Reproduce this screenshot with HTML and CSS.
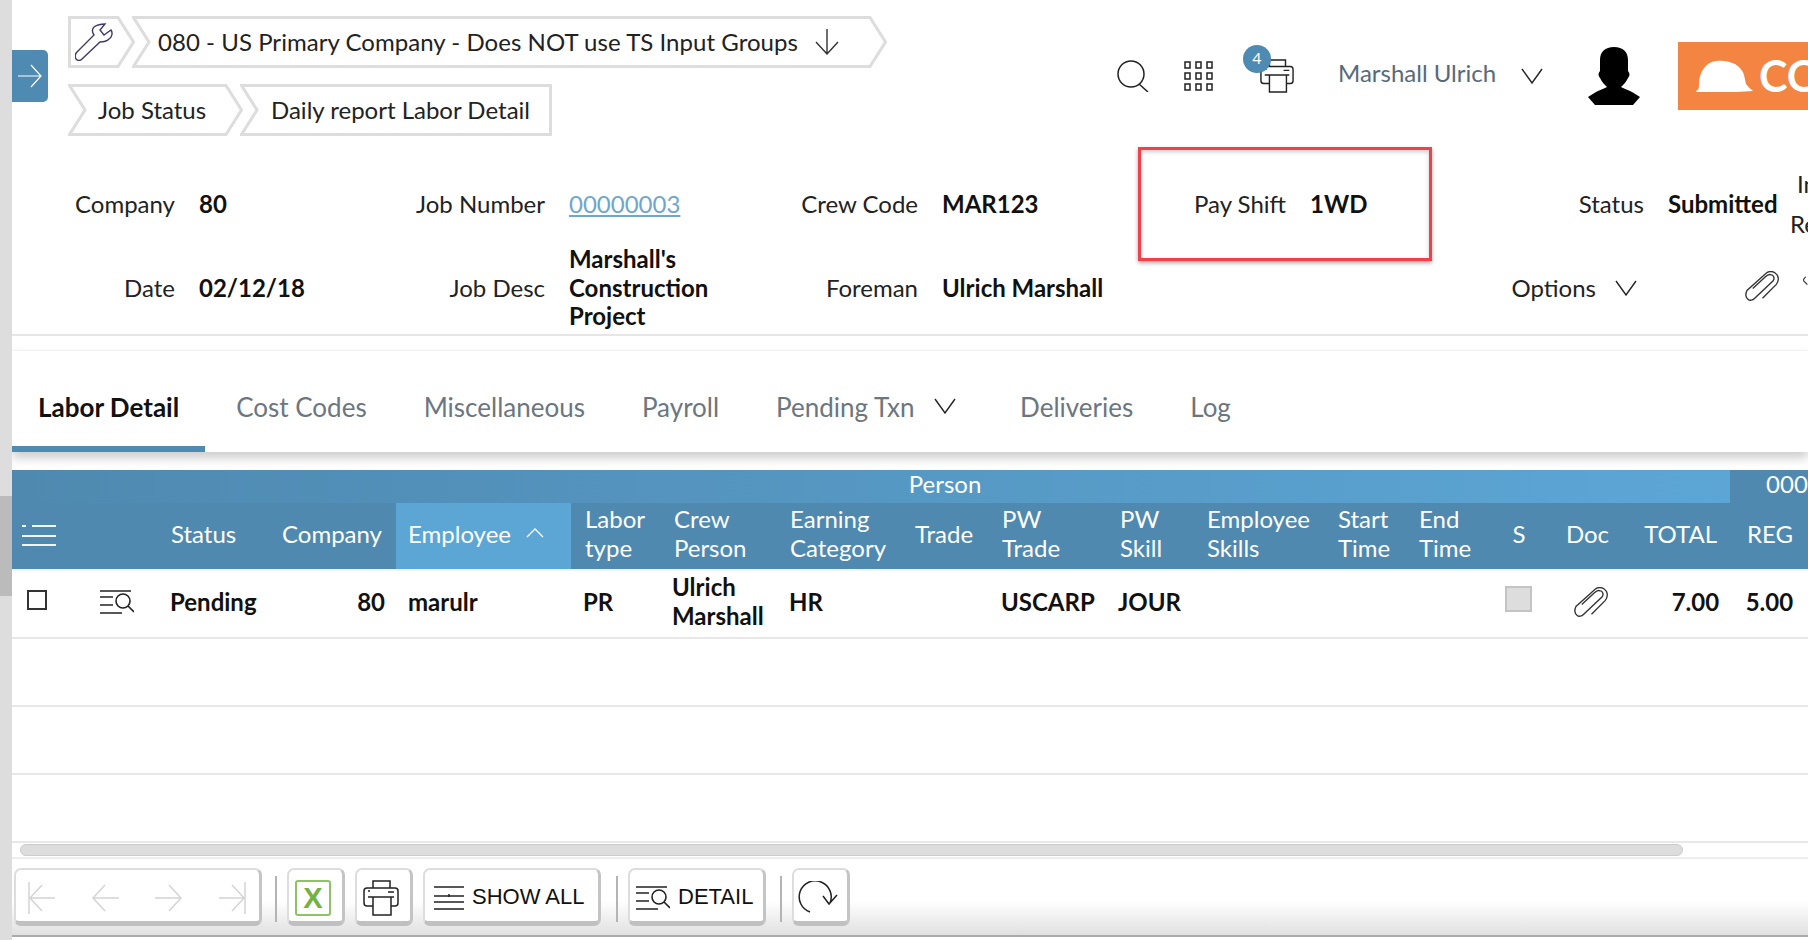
FILE: index.html
```html
<!DOCTYPE html>
<html lang="en">
<head>
    <meta charset="UTF-8">
    <meta name="viewport" content="width=device-width, initial-scale=1.0">
    <title>Daily report Labor Detail</title>
    <link rel="stylesheet" href="styles.css">
</head>
<body>
    <svg class="defs" width="0" height="0">
        <symbol id="clip" viewBox="0 0 36 36">
            <path d="M18 28 32 14C36 9 34 4 31 2 28 0 25 0 22 2L2 20C0 24 1 28 3 29 5 31 8 30 10 28L29 10C31 7 29 4 27 4 25 3 23 4 21 6L8 18" fill="none" stroke="#333" stroke-width="1.4"/>
        </symbol>
        <symbol id="detail" viewBox="0 0 34 24">
            <path d="M0 1h31M0 7h13M0 15h13M0 23h22" fill="none" stroke="#222" stroke-width="1.6"/>
            <circle cx="23" cy="11" r="7" fill="none" stroke="#222" stroke-width="1.6"/>
            <path d="m28 16 6 6" stroke="#222" stroke-width="1.6"/>
        </symbol>
        <symbol id="printer" viewBox="0 0 36 36">
            <path d="M10 8V1h17v7M10 26H4a3 3 0 0 1-3-3V11a3 3 0 0 1 3-3h28a3 3 0 0 1 3 3v12a3 3 0 0 1-3 3h-4M5 17h26M10 17h18v18H10zM25 12h6M5 11h2" fill="none" stroke="#222" stroke-width="1.5"/>
        </symbol>
        <symbol id="vee" viewBox="0 0 22 16">
            <path d="M1 1l10 14L21 1" fill="none" stroke="#222" stroke-width="1.4"/>
        </symbol>
    </svg>

    <div class="strip"></div>
    <button class="side-tab">
        <svg width="26" height="24" viewBox="0 0 26 24"><path d="M1 12h23M14 1l10 11-10 11" fill="none" stroke="#fff" stroke-width="1.2"/></svg>
    </button>

    <div class="main">
        <header class="top">
            <div class="crumbs">
                <div class="crumb-row">
                    <div class="crumb crumb-tool">
                        <svg class="crumb-shape" viewBox="0 0 67 52"><polygon points="1.5,1.5 50,1.5 65.5,26 50,50.5 1.5,50.5"/></svg>
                        <svg width="38" height="38" viewBox="0 0 38 38"><path d="M2 29 19 12C17 9 17 6 19 4 22 2 26 1 30 1L25 7 29 12 36 7C38 10 37 14 34 16 31 19 28 19 25 19L7 36C5 38 3 38 1 36 0 34 0 31 2 29Z" fill="none" stroke="#433a6b" stroke-width="1.4"/></svg>
                    </div>
                    <div class="crumb crumb-company">
                        <svg class="crumb-shape" viewBox="0 0 755 52"><polygon points="1.5,1.5 738,1.5 753.5,26 738,50.5 1.5,50.5 17,26"/></svg>
                        <span>080 - US Primary Company - Does NOT use TS Input Groups</span>
                        <svg class="down" width="24" height="26" viewBox="0 0 24 26"><path d="M12 0v25M1 13l11 12 11-12" fill="none" stroke="#333" stroke-width="1.4"/></svg>
                    </div>
                </div>
                <div class="crumb-row">
                    <div class="crumb crumb-status">
                        <svg class="crumb-shape" viewBox="0 0 175 52"><polygon points="1.5,1.5 158,1.5 173.5,26 158,50.5 1.5,50.5 17,26"/></svg>
                        <span>Job Status</span>
                    </div>
                    <div class="crumb crumb-daily">
                        <svg class="crumb-shape" viewBox="0 0 312 52"><polygon points="1.5,1.5 310.5,1.5 310.5,50.5 1.5,50.5 17,26"/></svg>
                        <span>Daily report Labor Detail</span>
                    </div>
                </div>
            </div>
            <div class="user">
                <svg class="u-search" width="32" height="32" viewBox="0 0 32 32"><circle cx="14" cy="14" r="13" fill="none" stroke="#222" stroke-width="1.5"/><path d="m22 24 9 8" stroke="#222" stroke-width="1.5"/></svg>
                <svg class="u-grid" width="30" height="30" viewBox="0 0 30 30">
                    <path d="M1 1h5v6H1zM12 1h5v6h-5zM23 1h5v6h-5zM1 12h5v6H1zM12 12h5v6h-5zM23 12h5v6h-5zM1 23h5v6H1zM12 23h5v6h-5zM23 23h5v6h-5z" fill="none" stroke="#222" stroke-width="1.5"/>
                </svg>
                <div class="u-print">
                    <svg width="34" height="34"><use href="#printer"/></svg>
                    <span class="badge">4</span>
                </div>
                <span class="u-name">Marshall Ulrich</span>
                <svg class="u-vee" width="22" height="16"><use href="#vee"/></svg>
                <svg class="u-avatar" width="52" height="58" viewBox="0 0 52 58">
                    <path d="M26 0C35 0 40 5 40 13V24c2 2 2 5 0 7-2 4-4 6-7 9 3 2 8 3 11 5l8 5-7 8H7L0 50l8-5c3-2 8-3 11-5-3-3-5-5-7-9-2-2-2-5 0-7V13C12 5 17 0 26 0z"/>
                </svg>
                <div class="brand">
                    <svg width="58" height="33" viewBox="0 0 58 33"><path d="M0 31c2-1 3-2 3-7 0-12 7-22 17-23 6-1 13 0 19 3 5 3 8 7 9 11l2 9c2 3 5 5 7 7-10 1-25 1-30 1H3c-2 0-3 0-3-1z" fill="#fff"/></svg>
                    <span>CO</span>
                </div>
            </div>
        </header>

        <section class="info">
            <span class="lbl">Company</span><b class="val">80</b>
            <span class="lbl">Job Number</span><a class="val link">00000003</a>
            <span class="lbl">Crew Code</span><b class="val">MAR123</b>
            <span class="lbl">Pay Shift</span><b class="val">1WD</b>
            <span class="lbl">Status</span><b class="val">Submitted</b>
            <span class="clipped">In<br>Re</span>

            <span class="lbl">Date</span><b class="val">02/12/18</b>
            <span class="lbl">Job Desc</span><b class="val">Marshall's Construction Project</b>
            <span class="lbl">Foreman</span><b class="val nowrap">Ulrich Marshall</b>
            <span></span><span></span>
            <span class="lbl options">Options <svg width="22" height="16"><use href="#vee"/></svg></span>
            <span class="clip-cell"><svg width="35" height="35"><use href="#clip"/></svg></span>
            <span class="more"><svg width="8" height="12" viewBox="0 0 8 12"><path d="M3 0 0 4l5 5" fill="none" stroke="#333" stroke-width="1.4"/></svg></span>
            <div class="red-box"></div>
        </section>

        <nav class="tabs">
            <a class="tab active">Labor Detail</a>
            <a class="tab">Cost Codes</a>
            <a class="tab">Miscellaneous</a>
            <a class="tab">Payroll</a>
            <a class="tab">Pending Txn <svg width="22" height="16"><use href="#vee"/></svg></a>
            <a class="tab">Deliveries</a>
            <a class="tab">Log</a>
        </nav>

        <div class="grid-wrap">
            <table class="grid">
                <colgroup>
                    <col class="c72"><col class="c76"><col class="c110"><col class="c126"><col class="c175"><col class="c91">
                    <col class="c117"><col class="c124"><col class="c87"><col class="c118"><col class="c87"><col class="c131">
                    <col class="c81"><col class="c83"><col class="c60"><col class="c82"><col class="c98"><col class="c78">
                </colgroup>
                <thead>
                    <tr class="group">
                        <th colspan="2"></th>
                        <th colspan="15" class="center">Person</th>
                        <th class="group-end">000</th>
                    </tr>
                    <tr class="head">
                        <th class="menu"><svg width="34" height="22" viewBox="0 0 34 22"><path d="M0 1h4M10 1h24M0 11h34M0 20h34" stroke="#f2f6f9" stroke-width="1.8"/></svg></th>
                        <th></th>
                        <th class="tight">Status</th>
                        <th>Company</th>
                        <th class="sorted">Employee <svg width="18" height="10" viewBox="0 0 18 10"><path d="M1 9l8-8 8 8" fill="none" stroke="#fff" stroke-width="1.3"/></svg></th>
                        <th class="labor">Labor<br>type</th>
                        <th>Crew<br>Person</th>
                        <th class="tight">Earning<br>Category</th>
                        <th>Trade</th>
                        <th>PW<br>Trade</th>
                        <th>PW<br>Skill</th>
                        <th>Employee<br>Skills</th>
                        <th>Start<br>Time</th>
                        <th>End<br>Time</th>
                        <th class="center s-col">S</th>
                        <th class="center doc-col">Doc</th>
                        <th class="right total-col">TOTAL</th>
                        <th class="right reg">REG</th>
                    </tr>
                </thead>
                <tbody>
                    <tr class="filled">
                        <td class="check-cell"><span class="check"></span></td>
                        <td class="detail-cell"><svg width="34" height="24"><use href="#detail"/></svg></td>
                        <td class="p10">Pending</td>
                        <td class="right">80</td>
                        <td class="p12">marulr</td>
                        <td class="p12">PR</td>
                        <td class="p10">Ulrich<br>Marshall</td>
                        <td class="p10">HR</td>
                        <td></td>
                        <td>USCARP</td>
                        <td class="p10">JOUR</td>
                        <td></td>
                        <td></td>
                        <td></td>
                        <td class="center s-col"><span class="s-box"></span></td>
                        <td class="center"><svg class="doc" width="35" height="35"><use href="#clip"/></svg></td>
                        <td class="right">7.00</td>
                        <td class="right reg">5.00</td>
                    </tr>
                    <tr><td colspan="18"></td></tr>
                    <tr><td colspan="18"></td></tr>
                    <tr><td colspan="18"></td></tr>
                </tbody>
            </table>
        </div>

        <div class="scrollbar"><div class="thumb"></div></div>

        <footer class="toolbar">
            <div class="tbtn nav">
                <svg width="28" height="32" viewBox="0 0 28 32"><path d="M1 0v32M27 16H2M14 3 2 16l12 13" fill="none" stroke="#d4d4d4" stroke-width="1.5"/></svg>
                <svg width="28" height="32" viewBox="0 0 28 32"><path d="M28 16H2M14 3 2 16l12 13" fill="none" stroke="#d4d4d4" stroke-width="1.5"/></svg>
                <svg width="28" height="32" viewBox="0 0 28 32"><path d="M0 16h26M14 3l12 13-12 13" fill="none" stroke="#d4d4d4" stroke-width="1.5"/></svg>
                <svg width="28" height="32" viewBox="0 0 28 32"><path d="M27 0v32M1 16h25M14 3l12 13-12 13" fill="none" stroke="#d4d4d4" stroke-width="1.5"/></svg>
            </div>
            <span class="sep"></span>
            <div class="tbtn square"><span class="excel">X</span></div>
            <div class="tbtn square"><svg width="36" height="36"><use href="#printer"/></svg></div>
            <div class="tbtn wide showall">
                <svg width="30" height="24" viewBox="0 0 30 24"><path d="M0 1h30M0 10h30M0 16h30" fill="none" stroke="#222" stroke-width="1.3"/><path d="M15 8v3" stroke="#222" stroke-width="1.5"/><path d="M0 23h30" stroke="#555" stroke-width="2"/></svg>
                <span>SHOW ALL</span>
            </div>
            <span class="sep"></span>
            <div class="tbtn wide detail">
                <svg width="34" height="24"><use href="#detail"/></svg>
                <span>DETAIL</span>
            </div>
            <span class="sep"></span>
            <div class="tbtn square">
                <svg width="40" height="34" viewBox="0 0 40 34"><path d="M12 31A16 16 0 1 1 32 22M25 15l6 8 8-9" fill="none" stroke="#222" stroke-width="1.5"/></svg>
            </div>
        </footer>
    </div>
</body>
</html>
```
FILE: styles.css
```css
* {
    box-sizing: border-box;
}
body {
    margin: 0;
    height: 940px;
    overflow: hidden;
    display: flex;
    font-family: "Lato", "Open Sans", sans-serif;
    font-size: 24px;
    line-height: 1.2;
    color: #222;
    background: #fff;
}
.defs {
    position: absolute;
}
.strip {
    flex: 0 0 12px;
    background: linear-gradient(#ddd 496px, #bbb 496px, #bbb 596px, #ddd 596px);
}
.side-tab {
    position: absolute;
    left: 12px;
    top: 50px;
    width: 36px;
    height: 52px;
    padding: 0;
    border: none;
    border-radius: 0 5px 5px 0;
    background: #4f8ab2;
    display: flex;
    align-items: center;
    justify-content: center;
}
.main {
    flex: 1;
    min-width: 0;
    overflow: hidden;
}

/* top */
.top {
    display: flex;
    height: 162px;
    padding: 16px 0 0 56px;
}
.crumbs {
    flex: 0 0 1049px;
}
.crumb-row {
    display: flex;
    margin-bottom: 16px;
}
.crumb {
    position: relative;
    height: 52px;
    display: flex;
    align-items: center;
    margin-right: -3px;
}
.crumb > span,
.crumb > svg:not(.crumb-shape) {
    position: relative;
}
.crumb-shape {
    position: absolute;
    left: 0;
    top: 0;
    width: 100%;
    height: 100%;
}
.crumb-shape polygon {
    fill: #fff;
    stroke: #ddd;
    stroke-width: 3;
}
.crumb-tool {
    width: 67px;
    padding-left: 7px;
}
.crumb-company {
    width: 755px;
    padding-left: 26px;
    letter-spacing: .04px;
}
.crumb-status {
    width: 175px;
    padding-left: 30px;
}
.crumb-daily {
    width: 312px;
    padding-left: 31px;
}
.down {
    margin-left: 17px;
}
.user {
    flex: 1;
    display: flex;
    align-items: center;
    height: 68px;
    margin-top: 26px;
    white-space: nowrap;
}
.u-search {
    flex: none;
}
.u-grid {
    flex: none;
    margin-left: 35px;
}
.u-print {
    position: relative;
    flex: none;
    width: 34px;
    height: 34px;
    margin: 0 44px 0 46px;
}
.badge {
    position: absolute;
    left: -17px;
    top: -14px;
    width: 28px;
    height: 28px;
    border-radius: 50%;
    background: #4f8ab2;
    color: #fff;
    font-size: 16px;
    line-height: 26px;
    text-align: center;
}
.u-name {
    color: #566a7c;
    width: 183px;
    flex: none;
    margin-bottom: 5px;
}
.u-vee {
    flex: none;
}
.u-avatar {
    flex: none;
    margin-left: 45px;
}
.brand {
    flex: none;
    width: 200px;
    height: 68px;
    margin-left: 38px;
    padding-left: 18px;
    background: #f38442;
    display: flex;
    align-items: center;
    gap: 5px;
    color: #fff;
    font-size: 43px;
    font-weight: bold;
}

/* info block */
.info {
    position: relative;
    display: grid;
    grid-template-columns: 163px 225px 145px 225px 148px 222px 146px 184px 174px 146px 20px;
    grid-template-rows: 84px 84px;
    align-items: center;
    border-bottom: 2px solid #e6e6e6;
    height: 174px;
    white-space: nowrap;
}
.lbl {
    text-align: right;
}
.val {
    padding-left: 24px;
    font-weight: bold;
    color: #111;
    white-space: normal;
}
.nowrap {
    white-space: nowrap;
}
.link {
    font-weight: normal;
    color: #6fa6cd;
    text-decoration: underline;
}
.clipped {
    line-height: 40px;
    text-indent: 7px;
}
.options {
    display: flex;
    align-items: center;
    justify-content: flex-end;
    gap: 19px;
    padding-right: 7px;
}
.clip-cell {
    display: flex;
    justify-content: flex-end;
    padding-right: 10px;
}
.more {
    padding: 0 0 12px 13px;
    display: flex;
}
.red-box {
    position: absolute;
    left: 1126px;
    top: -15px;
    width: 294px;
    height: 114px;
    border: 3px solid #f04048;
    box-shadow: 0 2px 4px rgba(0,0,0,.35), inset 0 2px 4px rgba(0,0,0,.2);
}

/* tabs */
.tabs {
    display: flex;
    gap: 5px;
    height: 102px;
    margin-top: 14px;
    padding-top: 41px;
    border-top: 1px solid #f2f2f2;
    background: #fff;
    box-shadow: 0 6px 10px rgba(0,0,0,.2);
    position: relative;
    font-size: 26px;
}
.tab {
    padding: 0 26px;
    color: #6c7680;
    white-space: nowrap;
}
.tab svg {
    margin: 0 7px 0 13px;
    vertical-align: 3px;
}
.tab.active {
    font-weight: bold;
    color: #111;
    border-bottom: 6px solid #4f8ab2;
}

/* table */
.grid-wrap {
    margin-top: 18px;
    height: 373px;
    overflow: hidden;
}
.grid {
    width: 1796px;
    table-layout: fixed;
    border-collapse: separate;
    border-spacing: 0;
}
.c72 { width: 72px; }
.c76 { width: 76px; }
.c110 { width: 110px; }
.c126 { width: 126px; }
.c175 { width: 175px; }
.c91 { width: 91px; }
.c117 { width: 117px; }
.c124 { width: 124px; }
.c87 { width: 87px; }
.c118 { width: 118px; }
.c131 { width: 131px; }
.c81 { width: 81px; }
.c83 { width: 83px; }
.c60 { width: 60px; }
.c82 { width: 82px; }
.c98 { width: 98px; }
.c78 { width: 78px; }
.grid th {
    font-weight: normal;
    text-align: left;
    color: #fff;
    padding: 0 12px 4px;
    white-space: nowrap;
}
.group {
    height: 33px;
    background: linear-gradient(90deg, #4f89b0, #5ca6d6 96%);
}
.grid .group th {
    padding: 0 0 5px;
    line-height: 28px;
}
.grid .group .center {
    text-align: center;
}
.grid .group-end {
    background: #4f89b0;
    overflow: hidden;
}
.grid .group th.group-end {
    padding-left: 36px;
}
.head {
    height: 66px;
    background: #4f89b0;
}
.grid .sorted {
    background: #5ca6d6;
}
.sorted svg {
    margin-left: 9px;
    vertical-align: 5px;
}
.grid .labor {
    padding-left: 14px;
}
.grid .tight {
    padding-left: 11px;
}
.grid .menu {
    padding: 0 0 0 10px;
}
.menu svg {
    display: block;
}
.grid .center {
    text-align: center;
}
.grid .right {
    text-align: right;
}
.grid .s-col {
    padding-right: 14px;
}
.grid .doc-col {
    padding-right: 19px;
}
.grid .total-col {
    padding-right: 13px;
}
.grid .reg {
    padding-right: 15px;
}
.grid td {
    height: 68px;
    padding: 0 11px;
    border-bottom: 2px solid #e8e8e8;
    font-weight: bold;
    color: #111;
    white-space: nowrap;
    vertical-align: middle;
}
.grid .filled td {
    height: 70px;
    border-top: 2px solid #f2f2f2;
    padding-bottom: 4px;
}
.grid td.p10 {
    padding-left: 10px;
}
.grid td.p12 {
    padding-left: 12px;
}
.grid .check-cell {
    padding-left: 15px;
}
.check {
    display: block;
    width: 20px;
    height: 20px;
    margin-bottom: 4px;
    border: 2px solid #333;
}
.grid .detail-cell {
    padding-left: 16px;
}
.detail-cell svg {
    display: block;
}
.s-box {
    display: inline-block;
    width: 27px;
    height: 26px;
    margin-bottom: 6px;
    background: #ddd;
    border: 2px solid #c4c4c4;
    vertical-align: middle;
}
.doc {
    margin-top: 4px;
    vertical-align: middle;
}

/* scrollbar and bottom bar */
.scrollbar {
    height: 16px;
    padding: 1px 0 0 8px;
    border-bottom: 2px solid #eee;
}
.thumb {
    width: 1663px;
    height: 12px;
    border-radius: 6px;
    background: #ddd;
    border: 1px solid #ccc;
}
.toolbar {
    display: flex;
    align-items: flex-start;
    height: 78px;
    padding: 9px 0 0 2px;
    background: linear-gradient(#fff 55%, #e0e0e0);
    border-bottom: 2px solid #aaa;
}
.tbtn {
    height: 58px;
    display: flex;
    align-items: center;
    flex: none;
    padding-top: 5px;
    background: #fff;
    border: 2px solid #ddd;
    border-right: 3px solid #c4c4c4;
    border-bottom: 5px solid #c0c0c0;
    border-radius: 7px;
    font-family: "Liberation Sans", Arial, sans-serif;
    font-size: 22px;
    color: #111;
}
.tbtn span {
    margin-bottom: 2px;
}
.nav {
    width: 248px;
    padding-left: 12px;
    padding-right: 13px;
    justify-content: space-between;
}
.sep {
    flex: none;
    width: 2px;
    height: 46px;
    margin: 8px 10px 0 13px;
    background: #b4b4b4;
}
.square {
    width: 58px;
    margin-right: 10px;
    padding-right: 5px;
    justify-content: center;
}
.showall {
    width: 178px;
    margin-right: 2px;
    padding-left: 9px;
    gap: 8px;
}
.detail {
    width: 138px;
    margin-right: 1px;
    padding-left: 6px;
    gap: 8px;
}
.tbtn .excel {
    display: block;
    flex: none;
    width: 36px;
    height: 36px;
    margin: 0;
    border: 2px solid #8fc264;
    border-radius: 3px;
    background: #fff;
    color: #73b23f;
    font-family: "Liberation Sans", Arial, sans-serif;
    font-size: 29px;
    font-weight: bold;
    line-height: 32px;
    text-align: center;
}
```
